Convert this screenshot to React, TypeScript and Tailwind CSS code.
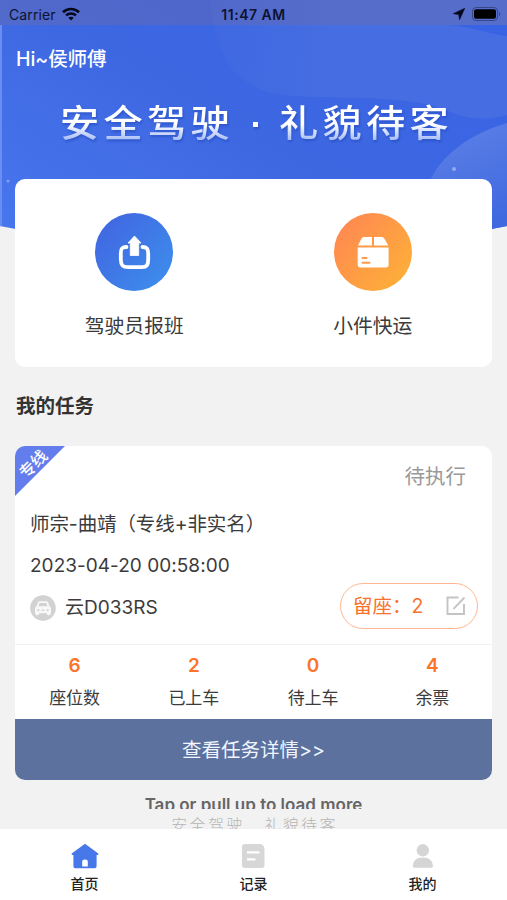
import React, { useState } from 'react';

const stats = [
  { label: '座位数', value: 6 },
  { label: '已上车', value: 2 },
  { label: '待上车', value: 0 },
  { label: '余票', value: 4 },
];

const StatusBar: React.FC = () => (
  <div className="relative grid h-[25px] grid-cols-3 items-center bg-[#9c7070]/20 px-[9px] pt-[3px] text-[#0d1330]">
    <div className="flex items-center gap-[6px]">
      <span className="text-[14px] tracking-[0.1px]">Carrier</span>
      <svg width="18" height="14" viewBox="0 0 18 14" fill="none" stroke="#05081a">
        <path d="M1 5.2C5.4.9 12.6.9 17 5.2" strokeWidth="2.7" />
        <path d="M4 8.4c2.8-2.6 7.2-2.6 10 0" strokeWidth="2.5" />
        <path d="M6.3 10.7c1.5-1.4 3.9-1.4 5.4 0L9 13.6z" fill="#05081a" stroke="none" />
      </svg>
    </div>
    <span className="text-center text-[14px] font-semibold tracking-[0.5px]">11:47 AM</span>
    <div className="flex items-center justify-end gap-[7px]">
      <svg width="12" height="12" viewBox="0 0 11 11">
        <path d="M10.8.2 6 10.8 5.2 5.9.2 5.2z" fill="#05081a" stroke="#05081a" strokeWidth="0.5" />
      </svg>
      <svg width="29" height="14" viewBox="0 0 29 14" className="-mr-[3px]">
        <rect x=".5" y=".5" width="25" height="13" rx="3.5" fill="none" stroke="#35488c" strokeWidth="1" />
        <rect x="2" y="2.2" width="22" height="9.6" rx="2" fill="#000" />
        <path d="M27 4.8c1.6.6 1.6 3.8 0 4.4z" fill="#35488c" />
      </svg>
    </div>
  </div>
);

// Blue banner behind the greeting and the top of the menu card
const HeaderBackground: React.FC = () => (
  <svg className="absolute top-0 left-0" width="507" height="242" viewBox="0 0 507 242">
    <defs>
      <linearGradient id="bg" x1="0" y1="1" x2="1" y2="0.2">
        <stop offset="0" stopColor="#4877ee" />
        <stop offset="0.5" stopColor="#3e68e2" />
        <stop offset="1" stopColor="#3863e4" />
      </linearGradient>
      <linearGradient id="haze" x1="0" y1="0" x2="1" y2="0">
        <stop offset="0" stopColor="#466de1" stopOpacity="0.3" />
        <stop offset="0.4" stopColor="#466de1" />
      </linearGradient>
      <linearGradient id="planet" x1="0" y1="0" x2="0.3" y2="1">
        <stop offset="0" stopColor="#5f82e7" />
        <stop offset="1" stopColor="#4069e0" />
      </linearGradient>
      <clipPath id="curve">
        <path d="M0 0H507V226C340 260 170 260 0 226Z" />
      </clipPath>
    </defs>
    <g clipPath="url(#curve)">
      <rect width="507" height="242" fill="url(#bg)" />
      <path d="M210 0C215 55 235 88 282 95C350 101 405 92 453 113C475 121 492 119 507 115V36C492 35 468 26 450 25H507V0Z" fill="url(#haze)" />
      <path d="M428 185C440 155 470 134 507 123V242H440Z" fill="url(#planet)" />
      <rect y="25" width="2" height="205" fill="#6b8cf3" />
      <circle cx="454" cy="169" r="2" fill="#90a9f1" />
      <circle cx="8" cy="181" r="1.5" fill="#83a0f4" />
    </g>
  </svg>
);

const UploadIcon: React.FC = () => (
  <svg width="78" height="78" viewBox="0 0 78 78">
    <defs>
      <linearGradient id="blue" x1="0.1" y1="0.2" x2="0.9" y2="0.9">
        <stop offset="0" stopColor="#4169e2" />
        <stop offset="1" stopColor="#3d8cec" />
      </linearGradient>
    </defs>
    <circle cx="39" cy="39" r="39" fill="url(#blue)" />
    <path d="M31.5 34C27 34 25.8 35.5 25.8 40V46.5C25.8 52 27.5 54.2 33 54.2H46.5C52 54.2 53.2 52 53.2 46.5V40C53.2 35.5 51.5 34 47.5 34" fill="none" stroke="#fff" strokeWidth="3.8" strokeLinecap="round" />
    <path d="M39.5 23 46 30H43.7V42.5H35.3V30H33Z" fill="#fff" stroke="#fff" strokeWidth="0.8" strokeLinejoin="round" />
  </svg>
);

const ParcelIcon: React.FC = () => (
  <svg width="78" height="78" viewBox="0 0 78 78">
    <defs>
      <linearGradient id="orange" x1="0.1" y1="0.2" x2="0.9" y2="0.9">
        <stop offset="0" stopColor="#ff8b50" />
        <stop offset="1" stopColor="#fdaf38" />
      </linearGradient>
    </defs>
    <circle cx="39" cy="39" r="39" fill="url(#orange)" />
    <path d="M29.5 24H38V32.5H24L27.5 25.5Q28.3 24 29.5 24ZM40 24H48.2Q49.5 24 50.3 25.5L54.3 32.5H40Z" fill="#fff" />
    <path d="M23.7 34.5H54.6V51.8Q54.6 54.5 52 54.5H26.3Q23.7 54.5 23.7 51.8Z" fill="#fff" />
    <path d="M28.5 45H32.5M28.5 49.8H35.5" stroke="#ff9a49" strokeWidth="2" strokeLinecap="round" />
  </svg>
);

const CarIcon: React.FC = () => (
  <svg width="26" height="26" viewBox="0 0 26 26">
    <circle cx="13" cy="13" r="12.8" fill="#d2d2d2" />
    <path d="M5 12.8 6.5 11.3 8 7.3Q8.4 6.2 9.6 6.2H16.4Q17.6 6.2 18 7.3L19.5 11.3 21 12.8V18.3H5Z" fill="#f8f8f8" />
    <path d="M5.5 17.5H9V19.2Q9 20.2 7.2 20.2T5.5 19.2ZM17 17.5H20.5V19.2Q20.5 20.2 18.7 20.2T17 19.2Z" fill="#f8f8f8" />
    <path d="M8.5 11.3 9.6 7.9H16.4L17.5 11.3Z" fill="#d2d2d2" />
    <circle cx="8.3" cy="15.2" r="1.1" fill="#d2d2d2" />
    <circle cx="17.7" cy="15.2" r="1.1" fill="#d2d2d2" />
    <path d="M11.4 15.2h3.2" stroke="#d2d2d2" strokeWidth="1.3" />
  </svg>
);

const EditIcon: React.FC = () => (
  <svg width="20" height="20" viewBox="0 0 20 20" fill="none" stroke="#c4c4c4" strokeWidth="1.9">
    <path d="M12.5 1.5H1.5V18H18V8" />
    <path d="M7.5 12.8 18.5 1.5" />
  </svg>
);

const tabs = [
  {
    label: '首页',
    icon: (
      <svg width="28" height="26" viewBox="0 0 28 26">
        <path d="M14 .7 27.3 10.6Q27.8 12 26.5 12H25.6V23.3Q25.6 25.3 23.6 25.3H4.4Q2.4 25.3 2.4 23.3V12H1.5Q.2 12 .7 10.6Z" fill="#4778e9" />
        <path d="M11.2 23.5V18.8Q11.2 16.4 14 16.4T16.8 18.8V23.5Z" fill="#fff" />
      </svg>
    ),
  },
  {
    label: '记录',
    icon: (
      <svg width="23" height="24" viewBox="0 0 23 24" className="mt-px">
        <path d="M3 0H17Q22.5 0 22.5 5.5V21Q22.5 24 19.5 24H3Q0 24 0 21V3Q0 0 3 0Z" fill="#d7d7d7" />
        <path d="M5 8.3H17.5M5 15.3H13.5" stroke="#fff" strokeWidth="2.2" />
      </svg>
    ),
  },
  {
    label: '我的',
    icon: (
      <svg width="22" height="24" viewBox="0 0 22 24" fill="#d5d5d5" className="mt-px">
        <circle cx="10.8" cy="6.3" r="6.2" />
        <path d="M.7 22Q1 13.5 10.8 13.5T21 22Q21 23.7 19.3 23.7H2.4Q.7 23.7.7 22Z" />
      </svg>
    ),
  },
];

const App: React.FC = () => {
  const [activeTab, setActiveTab] = useState(0);

  return (
    <div className="relative flex h-[900px] w-[507px] flex-col overflow-hidden bg-[#f2f2f2] font-['Inter','Noto_Sans_CJK_SC',sans-serif] text-[#3b3b3b]">
      <HeaderBackground />
      <StatusBar />

      <header className="relative h-[154px] text-white">
        <div className="pt-[21px] pl-[16px] text-[19.5px] leading-[26px] font-medium tracking-[-0.1px]">Hi~侯师傅</div>
        <h1 className="mt-[26px] ml-[60px] flex w-[387px] items-center justify-between text-[37px] leading-[52px] font-medium drop-shadow-[1px_2px_1px_rgba(30,65,180,0.5)]">
          <span className="origin-left scale-x-[1.06] bg-linear-to-b from-white from-50% to-[#8fa9f2] to-90% bg-clip-text tracking-[4px] whitespace-nowrap text-transparent">安全驾驶</span>
          <span className="ml-[8px] size-[5px] bg-white" />
          <span className="mr-[4px] origin-left scale-x-[1.06] bg-linear-to-b from-white from-50% to-[#8fa9f2] to-90% bg-clip-text tracking-[4px] whitespace-nowrap text-transparent">礼貌待客</span>
        </h1>
      </header>

      <section className="relative mx-[15px] grid h-[188px] grid-cols-2 rounded-[10px] bg-white pt-[34px] text-[19.8px] leading-[28px]">
        <button className="flex flex-col items-center gap-[21px]">
          <UploadIcon />
          驾驶员报班
        </button>
        <button className="flex flex-col items-center gap-[21px]">
          <ParcelIcon />
          小件快运
        </button>
      </section>

      <h2 className="mt-[25px] ml-[16px] text-[19.5px] leading-[28px] font-bold text-[#333]">我的任务</h2>

      <section className="relative mx-[15px] mt-[26px] h-[334px] shrink-0 overflow-hidden rounded-[10px] bg-white">
        <div className="absolute top-0 left-0 size-[50px] bg-[#637eec] [clip-path:polygon(0_0,100%_0,0_100%)]" />
        <span className="absolute top-[8px] left-[1px] w-[34px] -rotate-45 text-center text-[16px] leading-[20px] font-medium text-white">专线</span>
        <div className="h-[198px] px-[15px] pt-[16px]">
          <div className="pr-[11px] text-right text-[20.5px] leading-[30px] text-[#999]">待执行</div>
          <div className="mt-[18px] text-[19.5px] leading-[28px] tracking-[-0.1px]">师宗-曲靖（专线+非实名）</div>
          <div className="mt-[14px] text-[19px] leading-[28px] tracking-[0.03px]">2023-04-20 00:58:00</div>
          <div className="mt-[3px] flex h-[46px] items-center justify-between">
            <div className="mt-[4px] flex items-center gap-[9px] text-[19px]">
              <CarIcon />
              <span className="pt-px">云D033RS</span>
            </div>
            <button className="mr-[-1px] flex h-[46px] w-[138px] items-center justify-between rounded-full border border-[#ffb791] pr-[11px] pl-[12px] text-[19.5px] text-[#f9722d]">
              <span className="pt-px whitespace-nowrap">留座：2</span>
              <EditIcon />
            </button>
          </div>
        </div>
        <div className="grid h-[75px] grid-cols-4 border-t border-[#f2f2f2] pt-[8px] text-center">
          {stats.map((item) => (
            <div key={item.label}>
              <div className="text-[19px] leading-[26px] font-semibold text-[#fb7429]">{item.value}</div>
              <div className="mt-[6px] text-[17px] leading-[26px]">{item.label}</div>
            </div>
          ))}
        </div>
        <button className="block h-[61px] w-full bg-[#5d719e] pt-[2px] text-[19.5px] text-[#f0f6ff]">查看任务详情&gt;&gt;</button>
      </section>

      <div className="mt-[14px] h-[15px] shrink-0 overflow-hidden text-center text-[17px] leading-[23px] font-semibold text-[#666]">
        Tap or pull up to load more
      </div>
      <div className="mt-[5px] flex h-[15px] shrink-0 justify-center gap-[20px] overflow-hidden pl-[2px] text-[16px] leading-[22px] font-light tracking-[2.3px] text-[#b5b5b5]">
        <span>安全驾驶</span>
        <span>礼貌待客</span>
      </div>

      <nav className="relative grid flex-1 grid-cols-3 bg-white">
        {tabs.map((tab, index) => (
          <button
            key={tab.label}
            onClick={() => setActiveTab(index)}
            aria-current={activeTab === index}
            className="flex flex-col items-center pt-[14px] text-[14px] leading-[20px] font-medium text-[#222]"
          >
            <span className="flex h-[31px] items-start justify-center">{tab.icon}</span>
            {tab.label}
          </button>
        ))}
      </nav>
    </div>
  );
};

export default App;
